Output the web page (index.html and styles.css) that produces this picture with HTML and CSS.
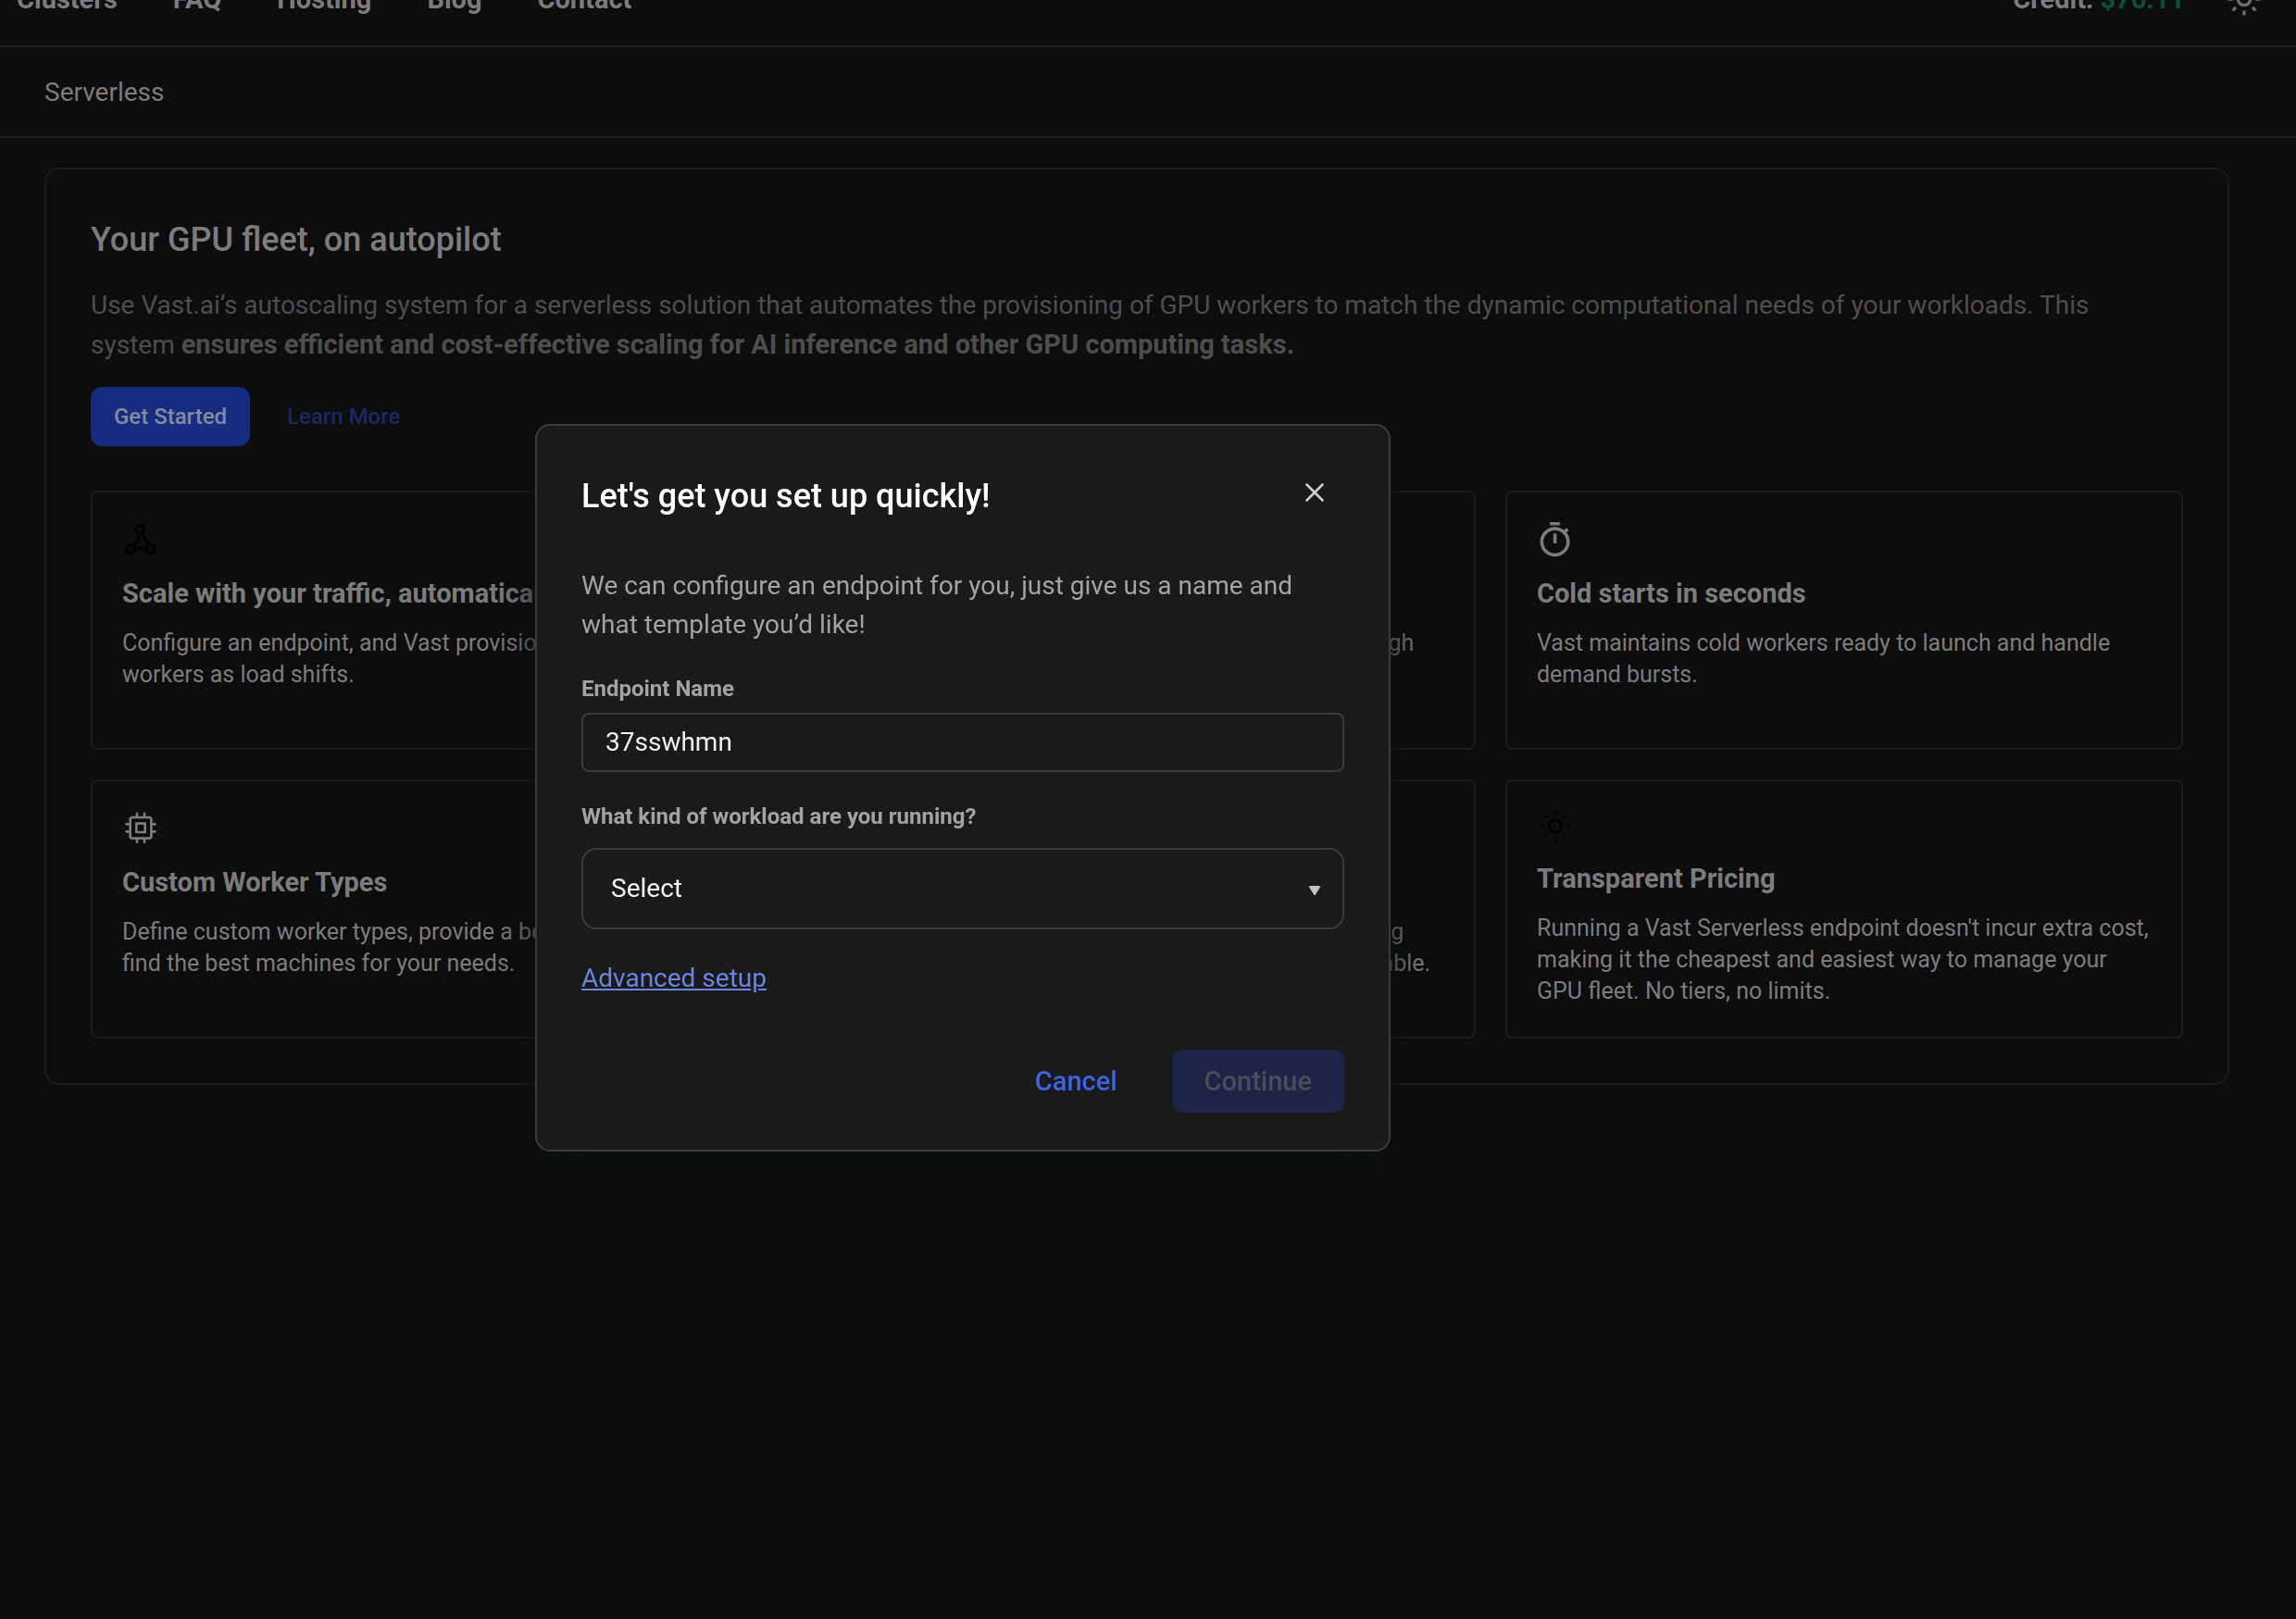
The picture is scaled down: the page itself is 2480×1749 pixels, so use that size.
FILE: index.html
```html
<!DOCTYPE html>
<html lang="en">
<head>
<meta charset="utf-8">
<title>Serverless</title>
<link rel="stylesheet" href="styles.css">
</head>
<body>
<header class="topbar">
  <nav class="topnav" aria-label="Main">
    <a href="#clusters">Clusters</a>
    <a href="#faq">FAQ</a>
    <a href="#hosting">Hosting</a>
    <a href="#blog">Blog</a>
    <a href="#contact">Contact</a>
  </nav>
  <div class="account">
    <span class="credit">Credit: <span class="amount">$76.11</span></span>
    <button class="theme" type="button" aria-label="Toggle theme">
      <svg viewBox="0 0 24 24" width="40" height="40" fill="none" stroke="currentColor" stroke-width="2"><circle cx="12" cy="12" r="4"/><path d="M12 1.500v3M12 19.500v3M1.500 12h3M19.500 12h3M4.600 4.600l2 2M17.400 17.400l2 2M4.600 19.400l2-2M17.400 6.600l2-2"/></svg>
    </button>
  </div>
</header>
<div class="crumb">Serverless</div>
<main class="content">
  <section class="panel">
    <h1 class="title">Your GPU fleet, on autopilot</h1>
    <p class="lead">Use Vast.ai’s autoscaling system for a serverless solution that automates the provisioning of GPU workers to match the dynamic computational needs of your workloads. This<br>system <strong>ensures efficient and cost-effective scaling for AI inference and other GPU computing tasks.</strong></p>
    <div class="actions">
      <button class="btn primary" type="button">Get Started</button>
      <a class="learn" href="#learn">Learn More</a>
    </div>
    <div class="cards">
      <article class="card">
        <svg class="icon dark" viewBox="0 0 24 24" fill="none" stroke="currentColor" stroke-width="2"><circle cx="11.400" cy="5" r="2.600"/><circle cx="5.500" cy="17.500" r="2.600"/><circle cx="18.500" cy="17.500" r="2.600"/><path d="M10.500 7.500v4.500L7 15.500M12.800 7.500l4.200 7M8 18l3.500-1.500h4.500"/></svg>
        <h2>Scale with your traffic, automatically</h2>
        <p>Configure an endpoint, and Vast provisions<br>workers as load shifts.</p>
      </article>
      <article class="card">
        <svg class="icon" viewBox="0 0 24 24" fill="none" stroke="currentColor" stroke-width="2"><path d="M4 18l6-7 4 4 6-9"/></svg>
        <h2>Save on every workload</h2>
        <p>Automatically benchmark GPUs for the workload through<br>live measurements.</p>
      </article>
      <article class="card">
        <svg class="icon" viewBox="1 1 22.500 22.500" fill="currentColor"><path d="M15 1H9v2h6V1zm-4 13h2V8h-2v6zm8.030-6.610l1.420-1.420c-.430-.510-.900-.990-1.410-1.410l-1.420 1.420C16.070 4.740 14.120 4 12 4c-4.970 0-9 4.030-9 9s4.020 9 9 9 9-4.030 9-9c0-2.120-.740-4.070-1.970-5.610zM12 20c-3.870 0-7-3.130-7-7s3.130-7 7-7 7 3.130 7 7-3.130 7-7 7z"/></svg>
        <h2>Cold starts in seconds</h2>
        <p>Vast maintains cold workers ready to launch and handle<br>demand bursts.</p>
      </article>
      <article class="card">
        <svg class="icon" viewBox="0 0 24 24" fill="none" stroke="currentColor" stroke-width="1.600" stroke-linecap="round"><rect x="5.200" y="4.200" width="13.600" height="13.600" rx="1.500"/><path d="M9.200 8.200h5.600v5.600H9.200zM9.600 1.700V4M14.400 1.700V4M9.600 18v2.300M14.400 18v2.300M2.700 8.600H5M2.700 13.400H5M19 8.600h2.300M19 13.400h2.300"/></svg>
        <h2>Custom Worker Types</h2>
        <p>Define custom worker types, provide a benchmark,<br>find the best machines for your needs.</p>
      </article>
      <article class="card">
        <svg class="icon" viewBox="0 0 24 24" fill="none" stroke="currentColor" stroke-width="2"><path d="M4 5h16v14H4zM4 10h16"/></svg>
        <h2>Metrics and Debugging</h2>
        <p>Track worker metrics and performance, with live logging<br>and dashboards, so your endpoints stay fast and available.</p>
      </article>
      <article class="card">
        <svg class="icon short dark" viewBox="0 0 24 24" fill="none" stroke="currentColor" stroke-width="1.800"><circle cx="12" cy="11" r="4.500"/><path d="M12 .5v2M12 19.500v2M1.500 11h2M20.500 11h2M4.600 3.600l1.400 1.400M18 17l1.400 1.400M4.600 18.400l1.400-1.400M18 5l1.400-1.400"/></svg>
        <h2>Transparent Pricing</h2>
        <p>Running a Vast Serverless endpoint doesn't incur extra cost,<br>making it the cheapest and easiest way to manage your<br>GPU fleet. No tiers, no limits.</p>
      </article>
    </div>
  </section>
</main>
<div class="overlay">
  <form class="dialog" role="dialog" aria-modal="true" aria-labelledby="dialog-title">
    <div class="dialog-head">
      <h2 id="dialog-title">Let's get you set up quickly!</h2>
      <button class="close" type="button" aria-label="Close">
        <svg viewBox="0 0 20 20" width="20" height="20" fill="none" stroke="currentColor" stroke-width="2.500" stroke-linecap="round"><path d="M1.500 1.500l17 17M18.500 1.500l-17 17"/></svg>
      </button>
    </div>
    <p class="intro">We can configure an endpoint for you, just give us a name and<br>what template you’d like!</p>
    <label class="label" for="endpoint">Endpoint Name</label>
    <input class="field" id="endpoint" type="text" value="37sswhmn">
    <label class="label" for="workload">What kind of workload are you running?</label>
    <div class="select-wrap">
      <select class="select" id="workload"><option>Select</option></select>
      <svg class="arrow" viewBox="0 0 14 12" width="14" height="12" fill="currentColor" stroke="currentColor" stroke-width="2" stroke-linejoin="round"><path d="M2 2h10L7 10z"/></svg>
    </div>
    <a class="advanced" href="#advanced">Advanced setup</a>
    <div class="dialog-actions">
      <button class="btn cancel" type="button">Cancel</button>
      <button class="btn continue" type="submit" disabled>Continue</button>
    </div>
  </form>
</div>
</body>
</html>
```
FILE: styles.css
```css
* { box-sizing: border-box; }
body {
  margin: 0;
  min-height: 100vh;
  background: #0d0d0d;
  color: #7c7c7c;
  font-family: Roboto, "Liberation Sans", sans-serif;
  font-size: 28px;
  overflow: hidden;
}
h1, h2, p { margin: 0; }
button, input, select { font-family: inherit; }
a { color: inherit; text-decoration: none; }

.topbar {
  display: flex;
  justify-content: space-between;
  align-items: center;
  height: 103px;
  margin-top: -52px;
  padding: 0 32px 0 18px;
  border-bottom: 2px solid #1f1f1f;
  font-size: 29px;
  font-weight: 700;
}
.topnav { display: flex; gap: 60px; }
.account { display: flex; align-items: center; gap: 40px; }
.amount { color: #0c4f31; }
.theme { display: flex; padding: 4px; border: 0; background: none; color: #6c6c6c; }

.crumb {
  height: 98px;
  padding: 0 48px;
  border-bottom: 2px solid #1f1f1f;
  line-height: 98px;
}
.content { padding: 32px 72px 32px 48px; }
.panel { padding: 48px; border: 2px solid #1d1d1d; border-radius: 16px; }
.title { font-size: 36px; line-height: 56px; font-weight: 500; }
.lead { margin-top: 22px; line-height: 42px; color: #4d4d4d; }
.lead strong { font-size: 29px; }
.actions { display: flex; align-items: center; gap: 40px; margin-top: 24px; }
.btn { border: 0; border-radius: 12px; font-weight: 500; }
.primary { height: 64px; padding: 0 25px; background: #162c80; color: #868b9c; font-size: 24px; }
.learn { color: #1b2861; font-size: 24px; font-weight: 500; }

.cards { display: grid; grid-template-columns: repeat(3, 1fr); gap: 32px; margin-top: 48px; }
.card { min-height: 280px; padding: 32px; border: 2px solid #1d1d1d; border-radius: 8px; }
.icon { display: block; width: 40px; height: 40px; }
.icon.short { height: 36px; }
.icon.dark { color: #020202; }
.card h2 { margin-top: 16px; font-size: 29px; line-height: 42px; }
.card p { margin-top: 16px; font-size: 25px; line-height: 34px; white-space: nowrap; }

.overlay {
  position: fixed;
  inset: 0;
  display: flex;
  align-items: center;
  justify-content: center;
  padding: 0 400px 48px 0;
}
.dialog {
  display: flex;
  flex-direction: column;
  width: 924px;
  padding: 48px 48px 40px;
  border: 2px solid #3b3c3c;
  border-radius: 16px;
  background: #1a1a1a;
  box-shadow: 0 16px 48px #0a0f10;
  color: #a3a3a3;
}
.dialog-head { display: flex; justify-content: space-between; align-items: flex-start; }
.dialog-head h2 { color: #fff; font-size: 36px; line-height: 56px; font-weight: 500; }
.close { display: flex; padding: 14px 22px; border: 0; background: none; color: #d0d0d0; }
.intro { margin-top: 48px; line-height: 42px; }
.label { margin-top: 30px; font-size: 24px; line-height: 36px; font-weight: 700; }
.field {
  height: 64px;
  margin-top: 8px;
  padding: 0 24px;
  border: 2px solid #3b3b3b;
  border-radius: 8px;
  background: none;
  color: #eee;
  font-size: 28px;
}
.select-wrap { display: grid; align-items: center; margin-top: 16px; }
.select {
  grid-area: 1 / 1;
  height: 88px;
  padding: 0 30px;
  border: 2px solid #3b3b3b;
  border-radius: 16px;
  appearance: none;
  background: none;
  color: #f4f4f4;
  font-size: 28px;
}
.arrow { grid-area: 1 / 1; justify-self: end; margin: 4px 25px 0 0; color: #c4c4c4; }
.advanced { align-self: flex-start; margin-top: 32px; line-height: 42px; color: #6a86dc; text-decoration: underline; }
.dialog-actions { display: flex; justify-content: flex-end; gap: 24px; margin-top: 56px; }
.dialog-actions .btn { height: 68px; padding: 0 35px; font-size: 29px; }
.cancel { background: none; color: #3d63e0; }
.continue { background: #1c2547; color: #4a4d57; }
```
